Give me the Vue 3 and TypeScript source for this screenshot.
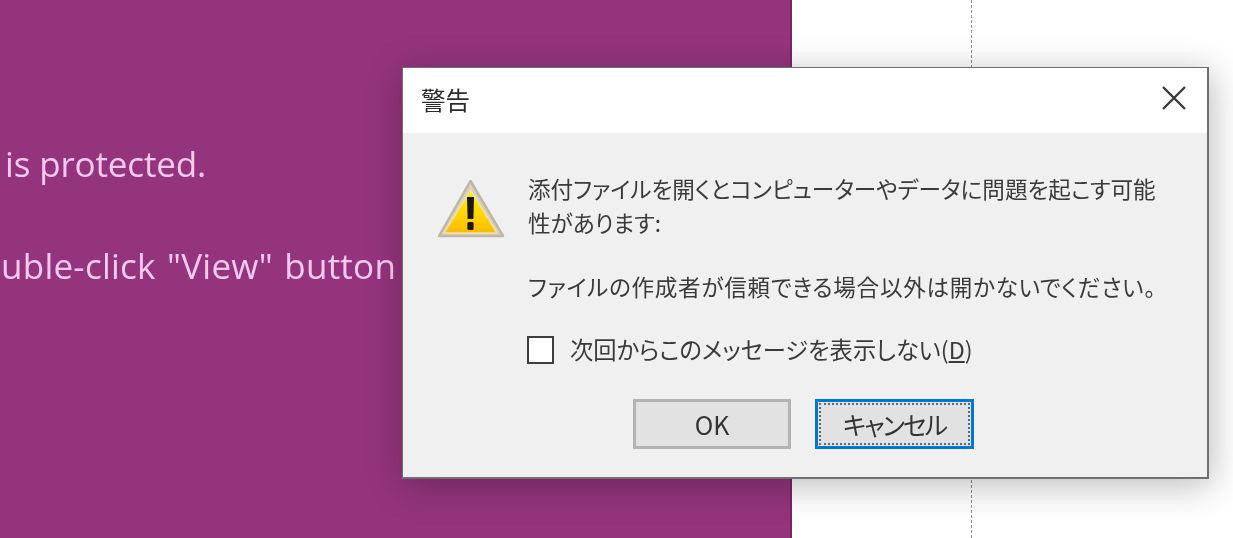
<script setup lang="ts">
const bodyLines: string[] = ['is protected.', 'uble-click "View" button']
</script>

<template>
  <div class="page">
    <section class="panel">
      <p v-for="line in bodyLines" :key="line" class="panel-line">{{ line }}</p>
    </section>
    <div class="gutter"></div>
    <div class="rest"></div>

    <div class="dialog" role="dialog" aria-label="警告">
      <header class="titlebar">
        <span class="title">警告</span>
        <svg class="close" viewBox="0 0 24 24" width="24" height="24" aria-label="閉じる">
          <path d="M1 1 L23 23 M23 1 L1 23" stroke="#3a3a3a" stroke-width="2.4" fill="none" />
        </svg>
      </header>
      <div class="content">
        <div class="message-row">
          <svg class="warn" viewBox="0 0 68 60" width="68" height="60" aria-hidden="true">
            <defs>
              <linearGradient id="warnFill" x1="0" y1="0" x2="0" y2="1">
                <stop offset="0" stop-color="#fff200" />
                <stop offset="0.6" stop-color="#ffd400" />
                <stop offset="1" stop-color="#fcb900" />
              </linearGradient>
            </defs>
            <path d="M33.5 2 L66 57 L2 57 Z" fill="#d8d2c0" stroke="#bdb7a5" stroke-width="2.5" stroke-linejoin="round" />
            <path d="M33.5 11 L60 54 L7 54 Z" fill="url(#warnFill)" stroke="#eee2a8" stroke-width="1.5" stroke-linejoin="round" />
            <path d="M30 18 H37 L36.4 40 H30.6 Z" fill="#1c1712" />
            <rect x="30.4" y="43" width="6.2" height="8" rx="1.5" fill="#1c1712" />
          </svg>
          <div class="message">
            <p class="warning-text">添付ファイルを開くとコンピューターやデータに問題を起こす可能<br />性があります:</p>
            <p class="advice">ファイルの作成者が信頼できる場合以外は開かないでください。</p>
          </div>
        </div>
        <label class="check-row">
          <span class="checkbox"></span>
          <span class="check-label">次回からこのメッセージを表示しない(<u>D</u>)</span>
        </label>
        <div class="buttons">
          <button class="btn" type="button">OK</button>
          <button class="btn btn-focus" type="button"><span class="focus-ring">キャンセル</span></button>
        </div>
      </div>
    </div>
  </div>
</template>

<style>
html, body { margin: 0; background: #fff; }
</style>

<style scoped>
.page {
  position: relative;
  width: 1233px;
  height: 538px;
  display: flex;
  overflow: hidden;
  background: #fff;
  font-family: "Noto Sans CJK JP", "Noto Sans", sans-serif;
  font-feature-settings: "palt";
  filter: blur(0.45px);
}
.panel {
  width: 792px;
  box-sizing: border-box;
  flex: none;
  background: #94347d;
  border-right: 2px solid #7a2665;
  padding: 144px 0 0 1px;
}
.panel-line {
  margin: 0 0 62px;
  font: 35px/40px "Open Sans", sans-serif;
  color: #f7c9ef;
  white-space: nowrap;
}
.panel-line:first-child { margin-left: 4px; letter-spacing: -0.15px; }
.panel-line:last-child { word-spacing: 2px; letter-spacing: 0.25px; }
.gutter {
  width: 179px;
  flex: none;
  border-right: 1px dashed #8a8a8a;
}
.rest { flex: 1; }
.dialog {
  position: absolute;
  left: 402px;
  top: 67px;
  width: 807px;
  height: 412px;
  box-sizing: border-box;
  border: 1px solid #6f6f6f;
  border-bottom-width: 2px;
  border-right-width: 2px;
  background: #f0f0f0;
  box-shadow: 2px 6px 34px rgba(0, 0, 0, 0.28);
  display: flex;
  flex-direction: column;
  color: #333;
}
.titlebar {
  height: 65px;
  box-sizing: border-box;
  flex: none;
  background: #fff;
  display: flex;
  align-items: center;
  justify-content: space-between;
  padding: 0 21px 4px 18px;
}
.title { font-size: 24.5px; line-height: 34px; color: #2b2b2b; margin-top: 3px; }
.close { display: block; margin-top: -1px; }
.content {
  flex: 1;
  display: flex;
  flex-direction: column;
  padding: 39px 0 0 34px;
}
.message-row { display: flex; gap: 23px; height: 163px; }
.warn { flex: none; margin-top: 7px; }
.message { font-size: 22.6px; line-height: 34px; color: #3a3a3a; white-space: nowrap; }
.message p { margin: 0; }
.message .advice { margin-top: 30px; letter-spacing: 0.7px; }
.check-row {
  display: flex;
  align-items: center;
  gap: 16px;
  padding-left: 90px;
  height: 30px;
}
.checkbox {
  width: 23px;
  height: 24px;
  flex: none;
  border: 2px solid #3d3d3d;
  background: #fff;
}
.check-label { font-size: 23.3px; line-height: 28px; margin-top: -2px; color: #3a3a3a; white-space: nowrap; }
.buttons {
  display: flex;
  gap: 24px;
  margin: 34px 0 0 196px;
}
.btn {
  width: 158px;
  height: 50px;
  box-sizing: border-box;
  padding: 0;
  border: 3px solid #b4b4b4;
  background: #e2e2e2;
  color: #333;
  font: inherit;
  font-feature-settings: "palt";
  font-size: 25px;
  line-height: 1;
  display: flex;
  align-items: center;
  justify-content: center;
}
.btn-focus {
  width: 159px;
  border-color: #0078d0;
  padding: 1px;
}
.focus-ring {
  flex: 1;
  align-self: stretch;
  display: flex;
  align-items: center;
  justify-content: center;
  border: 2px dotted #5a6a78;
  letter-spacing: -2px;
}
</style>
